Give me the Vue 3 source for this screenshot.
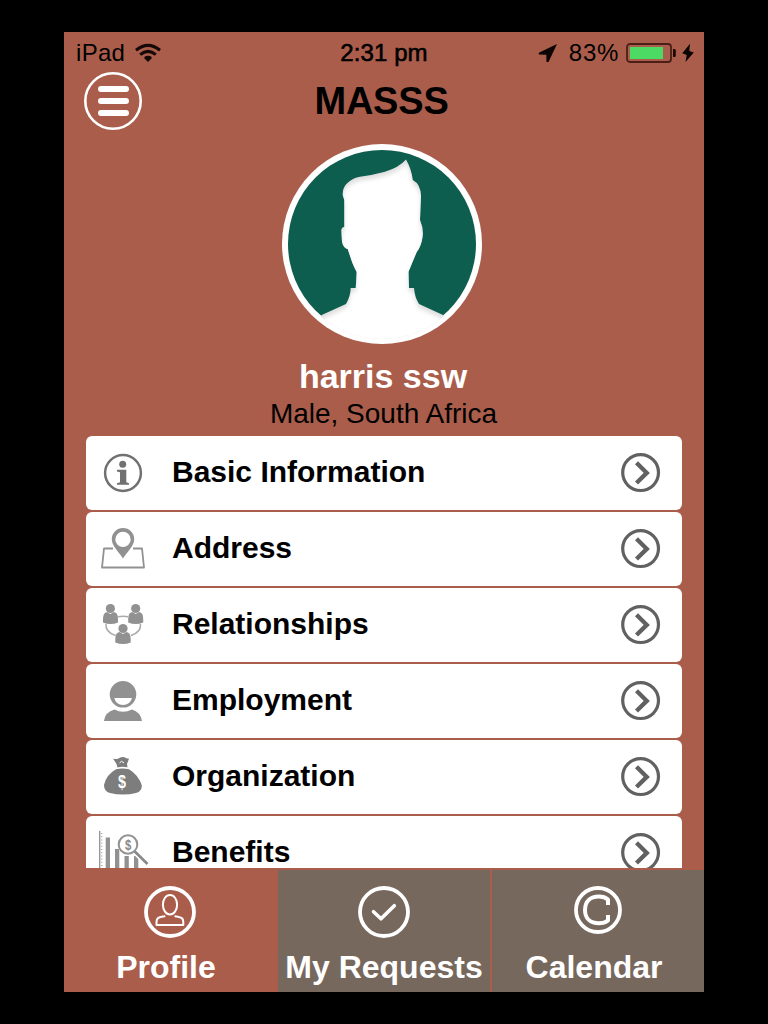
<script setup>
const rows = [
  { id: 'info', label: 'Basic Information' },
  { id: 'address', label: 'Address' },
  { id: 'relations', label: 'Relationships' },
  { id: 'employment', label: 'Employment' },
  { id: 'organization', label: 'Organization' },
  { id: 'benefits', label: 'Benefits' },
]
const tabs = [
  { id: 'profile', label: 'Profile' },
  { id: 'requests', label: 'My Requests' },
  { id: 'calendar', label: 'Calendar' },
]
const bust =
  'M28 190L39.700 171L64 160Q68.700 152 68.700 144H73.700L74.700 128Q71 121 69.700 117L65.700 105Q61.500 104 60 98L59.300 86Q60 83 62.300 83V56L60.700 51Q60.500 43 66 38.500Q71 34 78 32.700Q91 31 103 27.700Q117 23.500 124 15.500Q129.500 25 130.700 36Q138.500 40 139 52L138 76Q141.500 84 140.700 92Q139.500 102 134.700 108L126.500 127.700L127 144H132Q132.500 153 137 160L161 171L176 190V220H28Z'
</script>

<template>
  <div class="screen">
    <div class="app">
      <div class="status">
        <div class="side">
          <span class="device">iPad</span>
          <svg class="wifi" width="28" height="20" viewBox="0 0 28 20" fill="none" stroke="#150806" stroke-width="3.1">
            <path d="M2 7.2Q14-2.6 26 7.2" />
            <path d="M6.2 11.6Q14 5.2 21.800 11.600" />
            <path d="M14 19L10.500 15.500V13.800Q14 11.500 17.500 13.800V15.500Z" fill="#150806" stroke="none" />
          </svg>
        </div>
        <span class="time">2:31 pm</span>
        <div class="side right">
          <svg class="arrow" width="20" height="20" viewBox="0 0 20 20">
            <path d="M19 1L10.500 19L8.500 19L8.300 11.700L.8 11.500V9.700Z" fill="#0c0504" />
          </svg>
          <span class="percent">83%</span>
          <svg class="battery" width="50" height="20" viewBox="0 0 50 20">
            <rect x="1" y="1" width="44" height="18" rx="3" fill="none" stroke="#4b1f17" stroke-width="1.800" />
            <rect x="4" y="4" width="33" height="12" fill="#4cd964" />
            <path d="M47 6h1.500q1.300 0 1.300 1.500v5q0 1.500-1.300 1.500H47z" fill="#1d0a06" />
          </svg>
          <svg class="bolt" width="12" height="20" viewBox="0 0 12 20">
            <path d="M8 .8L.3 10.300L4.700 12L3.500 19L11.800 9.500L7.300 8z" fill="#0a0403" />
          </svg>
        </div>
      </div>

      <header class="header">
        <svg class="menu" width="58" height="58" viewBox="0 0 58 58" stroke="#fff" fill="none">
          <circle cx="29" cy="29" r="27.700" stroke-width="2.600" />
          <path d="M17 17H42M17 29H42M17 41H42" stroke-width="6" stroke-linecap="round" />
        </svg>
        <h1 class="title">MASSS</h1>
      </header>

      <svg class="avatar" width="200" height="200" viewBox="0 0 200 200">
        <defs>
          <clipPath id="face"><circle cx="100" cy="100" r="95" /></clipPath>
          <filter id="soft"><feGaussianBlur stdDeviation="2" /></filter>
          <clipPath id="bust"><path :d="bust" /></clipPath>
        </defs>
        <circle cx="100" cy="100" r="100" fill="#fff" />
        <g clip-path="url(#face)">
          <circle cx="100" cy="100" r="94" fill="#0d5e4e" />
          <g clip-path="url(#bust)">
            <rect width="200" height="210" fill="#dedede" />
            <path filter="url(#soft)" transform="translate(0 4)" fill="#fff" :d="bust" />
          </g>
        </g>
      </svg>

      <h2 class="name">harris ssw</h2>
      <p class="meta">Male, South Africa</p>

      <main class="list">
        <div v-for="row in rows" :key="row.id" class="row">
          <svg class="row-icon" width="52" height="44" viewBox="0 0 52 44" fill="#919191">
            <g v-if="row.id === 'info'" fill="#717171">
              <circle cx="26" cy="22" r="17.900" fill="none" stroke="#717171" stroke-width="2.500" />
              <circle cx="25.700" cy="13.300" r="3.500" />
              <path d="M20 18.800H29.300V31.300L32 32.300V33.800H20V32.300L23 31.300V21.300L20 20.500Z" />
            </g>
            <g v-else-if="row.id === 'address'">
              <path d="M16 21.500H7L5 40.500H47L45 21.500H36" fill="none" stroke="#919191" stroke-width="1.800" stroke-linejoin="round" />
              <path fill-rule="evenodd" d="M26 31.500C23 26 14.800 19.500 14.800 12.200A11.200 11.200 0 0 1 37.200 12.200C37.200 19.500 29 26 26 31.500ZM26 4.700A7.700 7.700 0 1 0 26 20.100A7.700 7.700 0 0 0 26 4.700Z" />
            </g>
            <g v-else-if="row.id === 'relations'">
              <path d="M21 13.700Q26 12.600 31 13.700M9 21Q8 29 18.500 32.500M43.500 21Q44.500 29 34 32.500" fill="none" stroke="#aaa" stroke-width="1.500" />
              <circle cx="13.400" cy="5.500" r="4.600" />
              <path d="M6 19.500V16Q6 9.500 10 9L13.400 11L17 9Q21 9.500 21 16V19.500Q13.500 22.500 6 19.500Z" />
              <circle cx="38.700" cy="5.500" r="4.600" />
              <path d="M31.200 19.500V16Q31.200 9.500 35.200 9L38.700 11L42.200 9Q46.200 9.500 46.200 16V19.500Q38.700 22.500 31.200 19.500Z" />
              <circle cx="26" cy="25.500" r="4.600" />
              <path d="M18.300 39.500V36Q18.300 29.500 22.500 29L26 31L29.500 29Q33.700 29.500 33.700 36V39.500Q26 42.500 18.300 39.500Z" />
            </g>
            <g v-else-if="row.id === 'employment'">
              <path fill-rule="evenodd" d="M26 2A13.300 13.300 0 0 1 39.300 15.300A13.300 13.300 0 0 1 12.700 15.300A13.300 13.300 0 0 1 26 2ZM17.300 19Q19 26 26 26Q33 26 35 19Z" />
              <path d="M7 42Q8 33 17.500 30.500Q26 35 35 30.500Q43.500 33 45 42Z" />
            </g>
            <g v-else-if="row.id === 'organization'" fill="#7d7d7d">
              <path d="M16 3.500Q19 4.500 21 3.700Q25 .8 29.500 3.200L32 3.800L30 9L30.500 12.300Q25 11 20.500 12.500L19.500 9Z" />
              <path d="M22.500 8L24.500 6.300L27 8" fill="none" stroke="#fff" stroke-width="1" />
              <path d="M19 14.300Q25 12.500 32 14.300Q41.500 20 44.800 30.500Q45 36.500 39 38Q26 41 13 38Q7 36.500 7 30Q9 20 19 14.300Z" />
              <text x="21" y="33.300" textLength="8" lengthAdjust="spacingAndGlyphs" class="dollar" font-size="18">$</text>
            </g>
            <g v-else>
              <path d="M2.700 0V45" stroke="#919191" stroke-width="1.300" />
              <path d="M4.700 2V45" stroke="#aaa" stroke-width="1.500" stroke-dasharray="1 2.200" />
              <path d="M8.700 6.500H13V45H8.700ZM18 18H22.300V45H18ZM27.500 25H31.800V45H27.500ZM37 25H41.300V45H37Z" />
              <path d="M37.800 20.500L51 33" stroke="#fff" stroke-width="6" />
              <path d="M37.800 20.500L50.500 33" stroke="#888" stroke-width="2.600" />
              <circle cx="31" cy="13.500" r="9.300" fill="#fff" stroke="#919191" stroke-width="2" />
              <text x="28" y="19" textLength="6.300" lengthAdjust="spacingAndGlyphs" class="coin" font-size="15">$</text>
            </g>
          </svg>
          <span class="row-label">{{ row.label }}</span>
          <svg class="chevron" width="40" height="40" viewBox="0 0 40 40" fill="none" stroke="#616161">
            <circle cx="19.600" cy="19.600" r="17.900" stroke-width="3.200" />
            <path d="M15.500 9.800L25.800 19.900L15.500 30" stroke-width="4.300" />
          </svg>
        </div>
      </main>

      <nav class="tabs">
        <div v-for="tab in tabs" :key="tab.id" class="tab" :class="tab.id">
          <svg width="52" height="52" viewBox="0 0 52 52" fill="none" stroke="#fff" stroke-linecap="round" stroke-linejoin="round">
            <g v-if="tab.id === 'profile'">
              <circle cx="26" cy="26" r="24" stroke-width="3.800" />
              <ellipse cx="26" cy="18.700" rx="7.100" ry="9.800" stroke-width="2" />
              <path d="M20.500 30.200C15 31.500 12.500 31.500 12.500 36V39H39.300V36C39.300 31.500 37 31.500 31.300 30.200" stroke-width="2" />
            </g>
            <g v-else-if="tab.id === 'requests'">
              <circle cx="26" cy="26" r="24" stroke-width="3.800" />
              <path d="M15.500 25.700L23 32.800L36.300 19.700" stroke-width="3.600" />
            </g>
            <g v-else>
              <circle cx="26" cy="24" r="22" stroke-width="3.800" />
              <path d="M36 19V13.500Q32.500 10.500 27 10.500C18.500 10.500 13 15.500 13 24C13 32.500 18.500 37.300 27 37.300Q32.500 37.300 36 34.500V29" stroke-width="4" stroke-linecap="butt" />
            </g>
          </svg>
          <span>{{ tab.label }}</span>
        </div>
      </nav>
    </div>
  </div>
</template>

<style>
body {
  margin: 0;
  background: #000;
}
</style>

<style scoped>
.screen {
  box-sizing: border-box;
  width: 768px;
  height: 1024px;
  padding: 32px 64px;
  background: #000;
  font-family: "Liberation Sans", Arial, sans-serif;
  overflow: hidden;
}
.app {
  display: flex;
  flex-direction: column;
  height: 960px;
  background: #aa5d4b;
  color: #000;
}
.status {
  display: grid;
  grid-template-columns: 1fr auto 1fr;
  align-items: center;
  height: 40px;
  padding: 0 10px 0 12px;
  font-size: 24px;
  line-height: 42px;
}
.side {
  display: flex;
  align-items: center;
  height: 40px;
}
.right {
  justify-content: flex-end;
}
.device {
  letter-spacing: 0.3px;
}
.wifi {
  margin-left: 9px;
}
.time {
  margin-right: 2px;
  letter-spacing: 0.1px;
  -webkit-text-stroke: 0.6px #000;
}
.arrow {
  margin-right: 1px;
}
.percent {
  margin: 0 7px 0 10px;
  letter-spacing: 0.7px;
}
.bolt {
  margin-left: 6px;
}
.header {
  display: grid;
  grid-template-columns: 58px 1fr 58px;
  height: 58px;
  padding: 0 20px;
}
.title {
  margin: 0 5px 0 0;
  font-size: 38px;
  letter-spacing: -0.2px;
  line-height: 58px;
  text-align: center;
}
.avatar {
  margin: 14px 0 0 218px;
  flex: none;
}
.name {
  margin: 12px 2px 0 0;
  height: 40px;
  line-height: 40px;
  font-size: 34px;
  color: #fff;
  text-align: center;
}
.meta {
  margin: 0 1px 0 0;
  height: 40px;
  line-height: 35px;
  font-size: 28px;
  text-align: center;
}
.list {
  display: flex;
  flex-direction: column;
  gap: 2px;
  height: 432px;
  margin: 0 22px;
  overflow: hidden;
}
.row {
  flex: none;
  display: flex;
  align-items: center;
  box-sizing: border-box;
  height: 74px;
  padding: 0 21px 0 11px;
  border-radius: 6px;
  background: #fff;
}
.row-label {
  flex: 1;
  margin-left: 23px;
  padding-bottom: 3px;
  font-size: 30px;
  font-weight: bold;
  line-height: 40px;
}
.dollar {
  fill: #fff;
  font-weight: bold;
}
.coin {
  fill: #888;
  font-weight: bold;
}
.tabs {
  display: grid;
  grid-template-columns: 212px 212px 212px;
  gap: 2px;
  height: 122px;
  margin-top: 2px;
}
.tab {
  display: flex;
  flex-direction: column;
  align-items: center;
  padding-top: 16px;
  background: #77685e;
  color: #fff;
  font-size: 32px;
  font-weight: bold;
  line-height: 40px;
  white-space: nowrap;
}
.tab span {
  margin-top: 9px;
}
.tab.profile {
  background: #aa5d4b;
}
.tab.profile span,
.tab.calendar span {
  margin-right: 8px;
}
</style>
